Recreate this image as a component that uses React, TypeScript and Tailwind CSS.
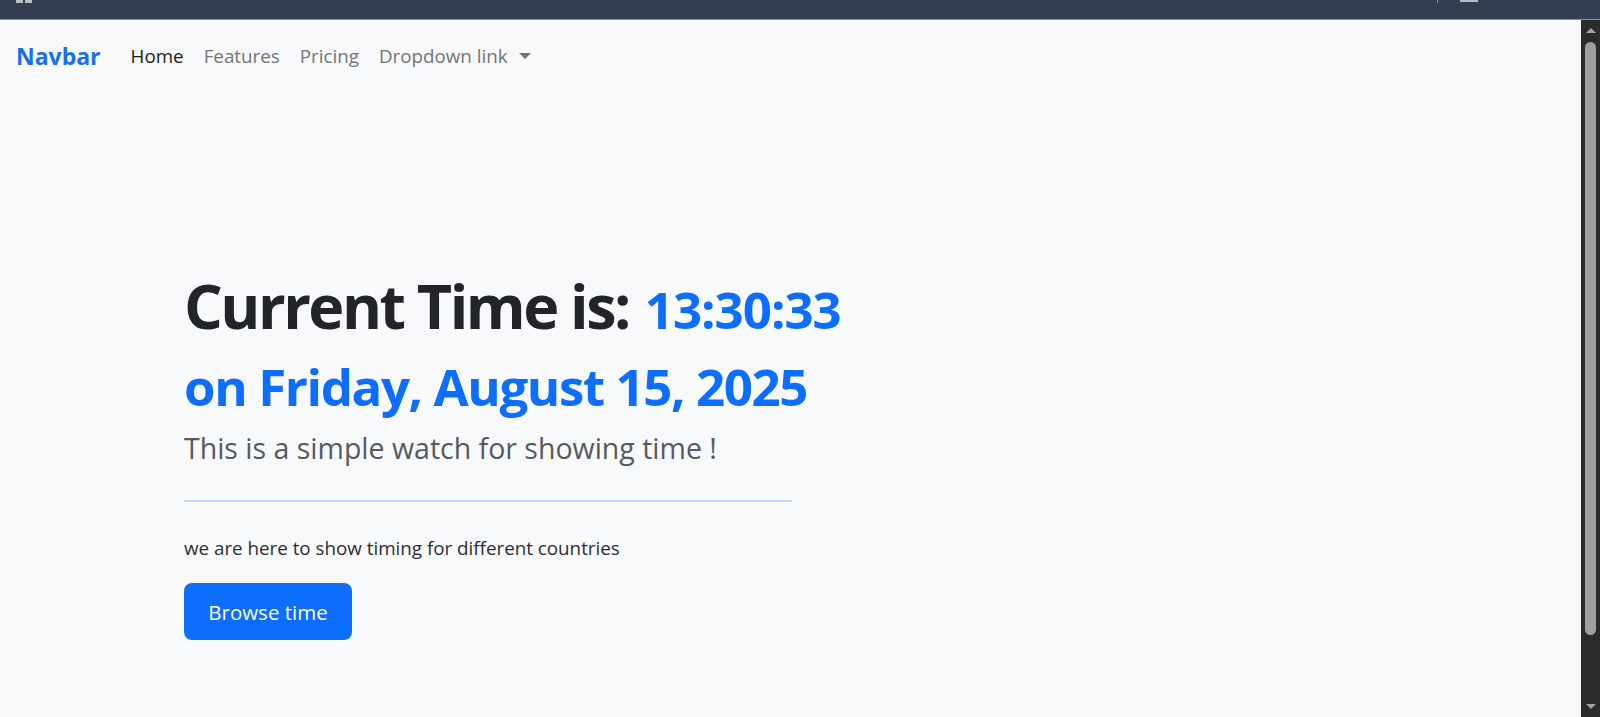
import React from "react";

const navLinks = ["Features", "Pricing"];

const Scrollbar = () => (
  <div className="w-[19px] shrink-0 bg-[#2b2b2b] flex flex-col items-center">
    <div className="mt-[8px] w-0 h-0 border-l-[5px] border-r-[5px] border-b-[5px] border-l-transparent border-r-transparent border-b-[#a3a3a3]" />
    <div className="mt-[9px] w-[11px] h-[593px] rounded-full bg-[#9f9f9f]" />
    <div className="flex-1" />
    <div className="mb-[8px] w-0 h-0 border-l-[5px] border-r-[5px] border-t-[5px] border-l-transparent border-r-transparent border-t-[#a3a3a3]" />
  </div>
);

export default function App() {
  return (
    <div className="w-[1600px] h-[717px] overflow-hidden flex flex-col bg-[#f8f9fa] font-['Open_Sans',sans-serif]">
      {/* window top bar */}
      <div className="h-[20px] shrink-0 bg-[#353e50] border-b border-[#8d939c] flex items-start justify-between">
        <div className="flex gap-[2px] ml-[16px]">
          <div className="w-[7px] h-[3px] bg-[#b8bcc4]" />
          <div className="w-[7px] h-[3px] bg-[#b8bcc4]" />
        </div>
        <div className="flex items-start gap-[22px] mr-[122px]">
          <div className="w-[1px] h-[3px] bg-[#8a909a]" />
          <div className="w-[18px] h-[2px] bg-[#b8bcc4]" />
        </div>
      </div>

      <div className="flex flex-1 min-h-0">
        <div className="flex-1 min-w-0">
          <nav className="h-[72px] flex items-center pl-[16px]">
            <a className="text-[23px] leading-[34px] font-bold text-[#1a6ef0] mr-[30px]">Navbar</a>
            <ul className="flex items-center text-[18.8px] leading-[28px] gap-[20px]">
              <li className="text-[#1c1c1d]">Home</li>
              {navLinks.map((l) => (
                <li key={l} className="text-[#737475]">
                  {l}
                </li>
              ))}
              <li className="text-[#737475] flex items-center">
                Dropdown link
                <span className="ml-[11px] w-0 h-0 border-l-[6px] border-r-[6px] border-t-[6px] border-l-transparent border-r-transparent border-t-[#737475]" />
              </li>
            </ul>
          </nav>

          <div className="pl-[184px] pt-[177px]">
            <h1 className="text-[61px] leading-[73px] font-bold text-[#212529]">
              <span className="tracking-[-2.5px]">Current Time is:</span>{" "}
              <span className="text-[51px] tracking-[-1px] text-[#0d6efd]">13:30:33</span>
              <br />
              <span className="text-[51px] tracking-[-1.4px] text-[#0d6efd]">on Friday, August 15, 2025</span>
            </h1>
            <p className="mt-[4px] text-[28.5px] leading-[42px] text-[#555b61]">
              This is a simple watch for showing time !
            </p>
            <div className="mt-[31px] w-[608px] h-[2px] bg-[#bfd7fb]" />
            <p className="mt-[32px] text-[18.8px] leading-[28px] text-[#2b2f33]">
              we are here to show timing for different countries
            </p>
            <button
              type="button"
              className="mt-[21px] w-[168px] h-[57px] rounded-[8px] bg-[#0d6efd] text-white text-[20.5px] leading-[30px]"
            >
              Browse time
            </button>
          </div>
        </div>
        <Scrollbar />
      </div>
    </div>
  );
}
